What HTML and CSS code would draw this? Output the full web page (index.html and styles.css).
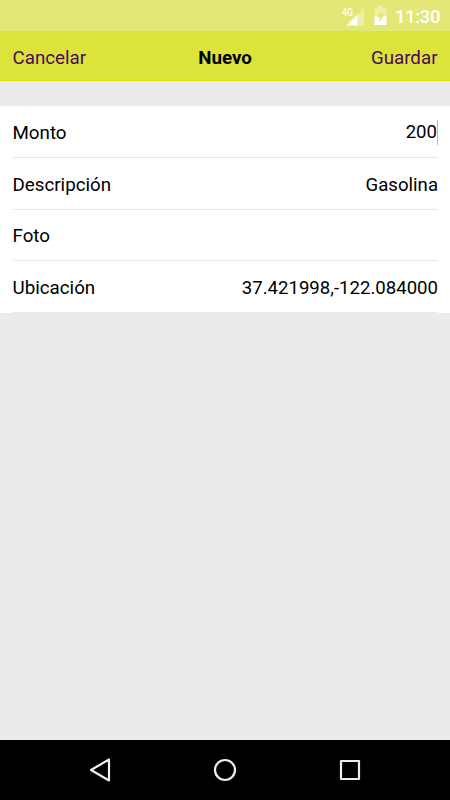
FILE: index.html
```html
<!DOCTYPE html>
<html lang="es">
  <head>
    <meta charset="utf-8">
    <title>Nuevo</title>
    <link rel="stylesheet" href="styles.css">
  </head>
  <body>
    <div class="screen">
      <div class="statusBar">
        <svg class="signal" width="24" height="20" viewBox="0 0 24 20">
          <path d="M22 2V19.500H15.500V8.500Z" fill="#fff" fill-opacity=".35"/>
          <path d="M15.500 8.500V19.500H4.500Z" fill="#fff"/>
          <text class="network" x="0" y="10" textLength="11" lengthAdjust="spacingAndGlyphs">4G</text>
        </svg>
        <svg class="battery" width="13" height="19" viewBox="0 0 13 19">
          <path d="M4 0H9V2H12.500V10H10V8.500H7.500V4L3 11H0.500V2H4Z" fill="#fff" fill-opacity=".35"/>
          <path d="M0.500 10H3V11H5.500V16L9.500 10H12.500V19H0.500Z" fill="#fff"/>
        </svg>
        <span class="clock">11:30</span>
      </div>
      <div class="navBar">
        <a class="navLink">Cancelar</a>
        <span class="navTitle">Nuevo</span>
        <a class="navLink right">Guardar</a>
      </div>
      <div class="list">
        <div class="row"><span>Monto</span><span class="value focused">200</span></div>
        <div class="row"><span>Descripción</span><span class="value">Gasolina</span></div>
        <div class="row"><span>Foto</span></div>
        <div class="row"><span>Ubicación</span><span class="value">37.421998,-122.084000</span></div>
      </div>
      <div class="softKeys">
        <svg width="24" height="26" viewBox="0 0 24 26"><path d="M21 2.500V23.500L3 13Z"/></svg>
        <svg width="24" height="24" viewBox="0 0 24 24"><circle cx="12" cy="12" r="10"/></svg>
        <svg width="24" height="24" viewBox="0 0 24 24"><rect x="3" y="3" width="18" height="18"/></svg>
      </div>
    </div>
  </body>
</html>
```
FILE: styles.css
```css
body {
  margin: 0;
  font-family: Roboto, sans-serif;
  font-size: 18.75px;
  color: #000;
}
.screen {
  display: flex;
  flex-direction: column;
  width: 450px;
  height: 800px;
  background-color: #ebebed;
}
.statusBar {
  display: flex;
  align-items: center;
  justify-content: flex-end;
  box-sizing: border-box;
  height: 31px;
  padding-right: 10px;
  background-color: #e3e776;
  color: #fff;
}
.network {
  font-size: 11px;
  font-weight: 500;
  fill: #fff;
}
.battery {
  margin: 0 8px 0 8px;
}
.clock {
  padding-top: 2px;
  font-size: 18.5px;
  font-weight: 500;
  letter-spacing: -0.4px;
}
.navBar {
  display: grid;
  grid-template-columns: 1fr auto 1fr;
  align-items: center;
  box-sizing: border-box;
  height: 50px;
  padding: 4px 12.5px 0;
  border-bottom: 1px solid #d8df00;
  background-color: #dce43a;
}
.navLink {
  color: #4a0a5a;
}
.navTitle {
  font-weight: bold;
}
.right {
  text-align: right;
}
.list {
  margin-top: 25px;
  background-color: #fff;
}
.row {
  display: flex;
  align-items: center;
  justify-content: space-between;
  box-sizing: border-box;
  height: 51.75px;
  margin: 0 12px 0 12.5px;
  padding-top: 3px;
  border-bottom: 1px solid #e6e6e8;
}
.row:last-child {
  border-bottom-color: #ebebed;
}
.value {
  font-size: 18.6px;
}
.focused {
  border-right: 1px solid #a5c8c3;
  line-height: 25px;
}
.softKeys {
  display: flex;
  align-items: center;
  justify-content: space-between;
  box-sizing: border-box;
  height: 60px;
  margin-top: auto;
  padding: 0 88px;
  background-color: #000;
}
.softKeys svg {
  fill: none;
  stroke: #eee;
  stroke-width: 2.2;
  stroke-linejoin: round;
}
```
